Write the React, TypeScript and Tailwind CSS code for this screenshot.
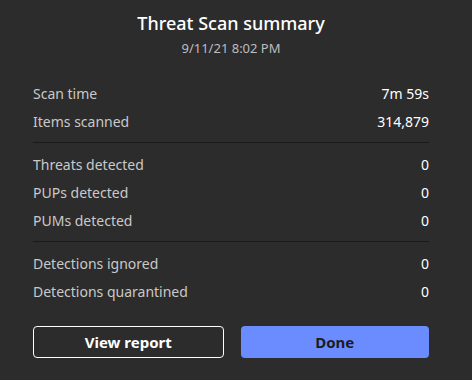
import React from "react";

const Row = ({ label, value }: { label: string; value: string }) => (
  <div className="flex h-[28px] items-center justify-between">
    <span className="text-[#c9c9c9]">{label}</span>
    <span className="text-white">{value}</span>
  </div>
);

const Divider = () => <div className="my-[7px] h-px bg-[#1a1a1a]" />;

export default function App() {
  return (
    <div
      className="h-[380px] w-[472px] bg-[#2c2c2c] pl-[33px] pr-[43px] pt-[11px] text-[14px]"
      style={{ fontFamily: "'Noto Sans', sans-serif" }}
    >
      <div className="text-center text-[18px] leading-[24px] font-medium text-white">
        Threat Scan summary
      </div>
      <div className="mt-[5px] text-center text-[13px] leading-[16px] text-[#bdbdbd]">
        9/11/21 8:02 PM
      </div>
      <div className="mt-[23px]">
        <Row label="Scan time" value="7m 59s" />
        <Row label="Items scanned" value="314,879" />
        <Divider />
        <Row label="Threats detected" value="0" />
        <Row label="PUPs detected" value="0" />
        <Row label="PUMs detected" value="0" />
        <Divider />
        <Row label="Detections ignored" value="0" />
        <Row label="Detections quarantined" value="0" />
      </div>
      <div className="mt-[21px] flex gap-[17px]">
        <button className="h-[32px] flex-1 rounded-[4px] border border-white text-[15px] font-bold text-white">
          View report
        </button>
        <button className="h-[32px] flex-1 rounded-[4px] bg-[#6b8cff] text-[15px] font-bold text-[#1c1c1c]">
          Done
        </button>
      </div>
    </div>
  );
}
